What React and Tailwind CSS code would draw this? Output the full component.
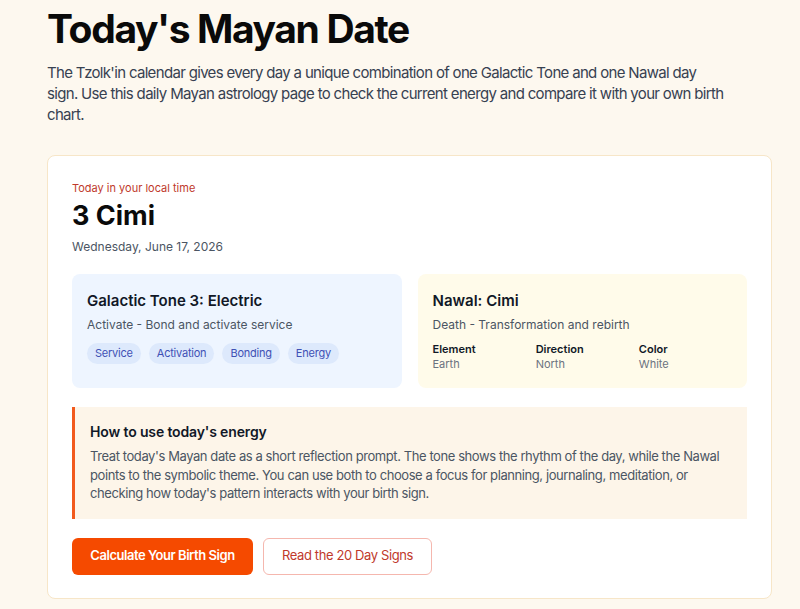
import React from 'react';

const TAGS = ['Service', 'Activation', 'Bonding', 'Energy'];

const NAWAL_FACTS = [
  { label: 'Element', value: 'Earth' },
  { label: 'Direction', value: 'North' },
  { label: 'Color', value: 'White' },
];

function ToneCard() {
  return (
    <div className="rounded-lg bg-[#eef5ff] px-[15px] pt-[15px] pb-[23px]">
      <h2 className="text-[15px] font-semibold text-[#111827] leading-[24px]">Galactic Tone 3: Electric</h2>
      <p className="mt-[2px] text-[12px] text-[#4b5563] leading-[20px]">Activate - Bond and activate service</p>
      <div className="mt-[8px] flex flex-wrap gap-[8px]">
        {TAGS.map((tag) => (
          <span key={tag} className="rounded-full bg-[#dde9fc] px-[8px] h-[21px] flex items-center text-[11px] text-[#3f51b5] tracking-[-0.02em]">
            {tag}
          </span>
        ))}
      </div>
    </div>
  );
}

function NawalCard() {
  return (
    <div className="rounded-lg bg-[#fffbea] px-[15px] pt-[15px] pb-[16px]">
      <h2 className="text-[15px] font-semibold text-[#111827] leading-[24px]">Nawal: Cimi</h2>
      <p className="mt-[2px] text-[12px] text-[#4b5563] leading-[20px]">Death - Transformation and rebirth</p>
      <div className="mt-[7px] grid grid-cols-3 gap-[10px]">
        {NAWAL_FACTS.map((f) => (
          <div key={f.label}>
            <div className="text-[11px] font-semibold text-[#111827] leading-[15px]">{f.label}</div>
            <div className="text-[11px] text-[#6b7280] leading-[15px]">{f.value}</div>
          </div>
        ))}
      </div>
    </div>
  );
}

export default function App() {
  return (
    <div className="min-h-[609px] bg-[#fdf8ef] font-['Inter',sans-serif] pl-[47px] pr-[28px] pt-[5px] pb-[12px]">
      {/* Intro */}
      <h1 className="text-[39px] font-bold text-[#0a0a0a] leading-[48px] tracking-[-0.035em]">Today's Mayan Date</h1>
      <p className="mt-[9px] max-w-[679px] text-[15px] text-[#374151] leading-[21px] tracking-[-0.045em]">
        The Tzolk'in calendar gives every day a unique combination of one Galactic Tone and one Nawal day sign. Use this daily Mayan astrology page to check the current energy and compare it with your own birth chart.
      </p>

      {/* Today card */}
      <div className="mt-[30px] rounded-lg border border-[#f7e6c8] bg-white px-[24px] pt-[25px] pb-[23px]">
        <p className="text-[11px] text-[#c0392b] leading-[14px]">Today in your local time</p>
        <h2 className="mt-[5px] text-[27px] font-bold text-[#0a0a0a] leading-[32px]">3 Cimi</h2>
        <p className="mt-[6px] text-[12px] text-[#4b5563] leading-[18px]">Wednesday, June 17, 2026</p>

        <div className="mt-[18px] grid grid-cols-2 gap-[16px]">
          <ToneCard />
          <NawalCard />
        </div>

        <div className="mt-[19px] border-l-[3px] border-[#f25a1d] bg-[#fdf5e9] pl-[15px] pr-[16px] pt-[15px] pb-[16px]">
          <h3 className="text-[14px] font-semibold text-[#111827] leading-[20px] tracking-[-0.01em]">How to use today's energy</h3>
          <p className="mt-[5px] text-[13px] text-[#4b5563] leading-[18.5px] tracking-[-0.032em]">
            Treat today's Mayan date as a short reflection prompt. The tone shows the rhythm of the day, while the Nawal points to the symbolic theme. You can use both to choose a focus for planning, journaling, meditation, or checking how today's pattern interacts with your birth sign.
          </p>
        </div>

        <div className="mt-[19px] flex gap-[10px]">
          <button className="h-[37px] w-[181px] rounded-md bg-[#f54a00] text-[13px] font-semibold text-white tracking-[-0.035em]">
            Calculate Your Birth Sign
          </button>
          <button className="h-[37px] w-[169px] rounded-md border border-[#f5b7ae] bg-white text-[13px] text-[#c0392b] tracking-[-0.03em]">
            Read the 20 Day Signs
          </button>
        </div>
      </div>
    </div>
  );
}
